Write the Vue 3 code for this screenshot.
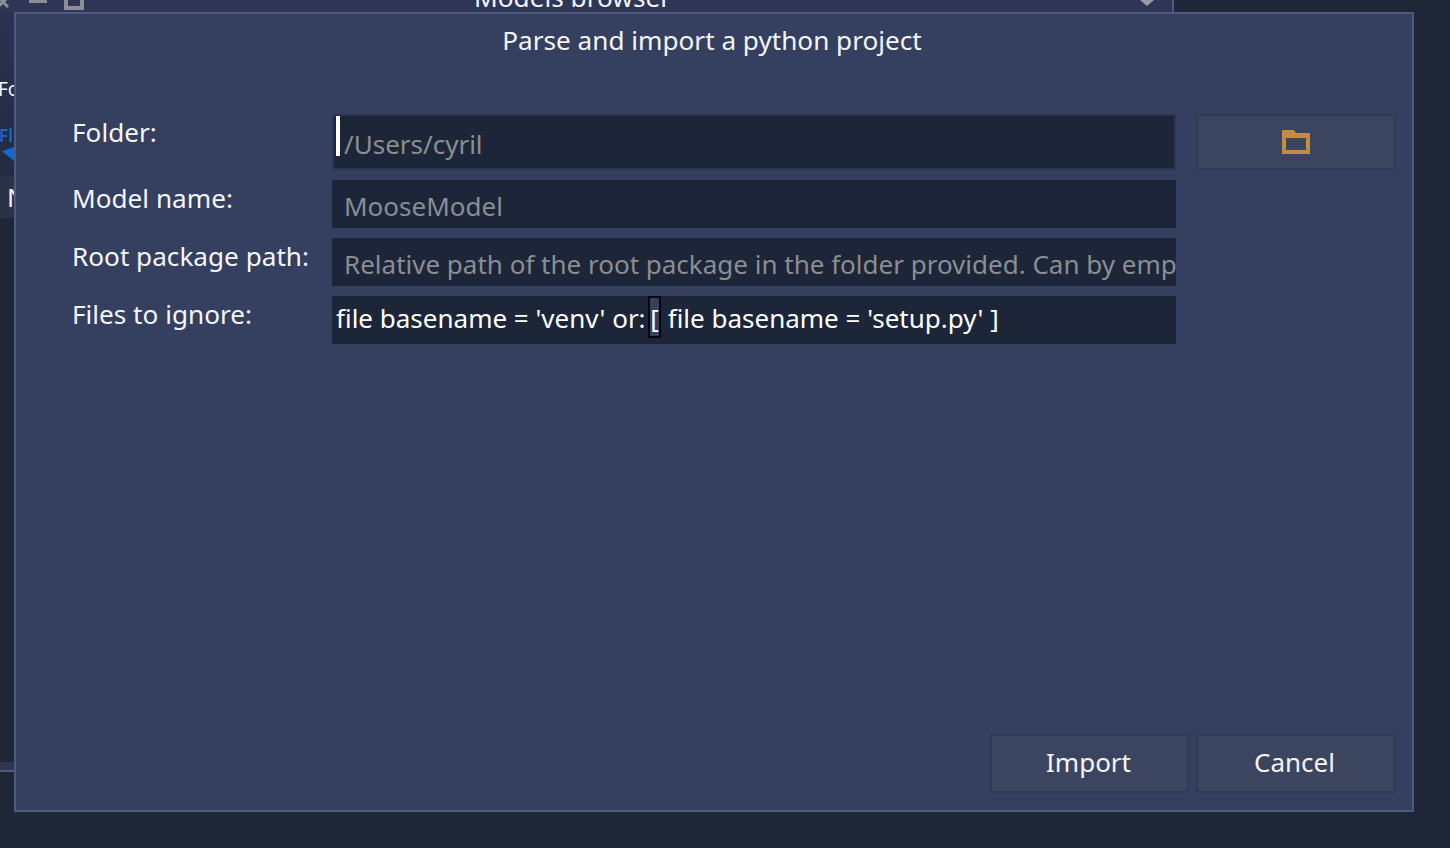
<template>
  <div class="desktop">
    <div class="back-window">
      <div class="back-titlebar">
        <svg class="win-close" width="12" height="8" viewBox="0 0 12 8">
          <path d="M-2 -3L8 7" stroke="#8c8f99" stroke-width="3" fill="none" />
          <path d="M8 -3L-2 7" stroke="#8c8f99" stroke-width="3" fill="none" />
        </svg>
        <span class="win-min"></span>
        <span class="win-max"></span>
        <span class="back-title">Models browser</span>
        <span class="back-arrow"></span>
      </div>
      <span class="peek peek-fo">Fo</span>
      <span class="peek peek-fl">Fl</span>
      <span class="peek-marker"></span>
      <span class="peek-row"></span>
      <span class="peek peek-n">N</span>
      <span class="peek-foot"></span>
    </div>

    <div class="dialog">
      <h1 class="dialog-title">Parse and import a python project</h1>

      <div class="form">
        <label class="row-label">Folder:</label>
        <div class="input input-folder">
          <span class="caret"></span>
          <span class="placeholder">/Users/cyril</span>
        </div>
        <button class="btn btn-folder" aria-label="Browse">
          <svg width="28" height="24" viewBox="0 0 28 24">
            <path fill-rule="evenodd" fill="#c48d3e" d="M0 0h12l2 3h14v21H0zM4 8v12h20V8z" />
          </svg>
        </button>

        <label class="row-label">Model name:</label>
        <div class="input input-hint"><span class="placeholder">MooseModel</span></div>
        <span></span>

        <label class="row-label">Root package path:</label>
        <div class="input input-hint">
          <span class="placeholder">Relative path of the root package in the folder provided. Can by empty</span>
        </div>
        <span></span>

        <label class="row-label">Files to ignore:</label>
        <div class="input input-code">
          <span>file basename = 'venv' or: <span class="cursor-char">[</span> file basename = 'setup.py' ]</span>
        </div>
        <span></span>
      </div>

      <div class="actions">
        <button class="btn btn-action">Import</button>
        <button class="btn btn-action">Cancel</button>
      </div>
    </div>
  </div>
</template>

<script setup>
</script>

<style>
html,
body {
  margin: 0;
  background: #1e2638;
}
</style>

<style scoped>
.desktop {
  position: relative;
  width: 1450px;
  height: 848px;
  overflow: hidden;
  background: #1e2638;
  font-family: "Noto Sans", sans-serif;
  color: #f4f6fa;
}

/* window behind the dialog, only its edges show */
.back-window {
  position: absolute;
  left: 0;
  top: 0;
  width: 1172px;
  height: 770px;
  background: linear-gradient(#2c3352 0, #232b42 170px, #1e2638 220px);
  border-right: 2px solid #4e5a80;
  border-bottom: 2px solid #4e5a80;
}

.back-titlebar {
  position: relative;
  height: 12px;
  background: #2f3655;
  overflow: hidden;
}

.win-close {
  position: absolute;
  left: 0;
  top: 0;
}

.win-min {
  position: absolute;
  left: 29px;
  top: 0;
  width: 18px;
  height: 3px;
  background: #8c8f99;
}

.win-max {
  position: absolute;
  left: 64px;
  top: -10px;
  width: 12px;
  height: 12px;
  border: 4px solid #8c8f99;
}

.back-title {
  position: absolute;
  left: 474px;
  top: -19px;
  font-size: 26.2px;
  line-height: 33px;
  white-space: nowrap;
}

.back-arrow {
  position: absolute;
  left: 1140px;
  top: 0;
  border-left: 7px solid transparent;
  border-right: 7px solid transparent;
  border-top: 6px solid #9a9ca3;
}

.peek {
  position: absolute;
  white-space: nowrap;
  line-height: 24px;
}

.peek-fo {
  left: -2px;
  top: 77px;
  font-size: 19px;
}

.peek-fl {
  left: -1px;
  top: 124px;
  font-size: 17px;
  font-weight: 600;
  color: #1668c8;
}

.peek-marker {
  position: absolute;
  left: 2px;
  top: 147px;
  width: 12px;
  height: 14px;
  background: #0f6ad6;
  clip-path: polygon(0 30%, 100% 0, 100% 100%);
}

.peek-row {
  position: absolute;
  left: 0;
  right: 0;
  top: 176px;
  height: 42px;
  background: #2a3248;
}

.peek-n {
  left: 7px;
  top: 184px;
  font-size: 26px;
  line-height: 26px;
}

.peek-foot {
  position: absolute;
  left: 0;
  right: 0;
  bottom: 0;
  height: 8px;
  background: #2f3655;
}

.dialog {
  position: absolute;
  left: 14px;
  top: 12px;
  width: 1400px;
  height: 800px;
  box-sizing: border-box;
  border: 2px solid #4e5a80;
  background: #353f60;
  display: flex;
  flex-direction: column;
  padding: 0 17px 17px 0;
}

.dialog-title {
  margin: 7px 0 0;
  padding-left: 13px;
  text-align: center;
  font-weight: 400;
  font-size: 26.15px;
  line-height: 38px;
}

.form {
  display: grid;
  grid-template-columns: 260px 844px 220px;
  grid-template-rows: 56px 48px 48px 48px;
  row-gap: 10px;
  margin-top: 55px;
  padding-left: 56px;
}

.row-label {
  font-size: 26.15px;
  line-height: 36px;
  white-space: nowrap;
}

.input {
  box-sizing: border-box;
  background: #1c2638;
  font-size: 26px;
  line-height: 48px;
  padding-left: 12px;
  white-space: nowrap;
  overflow: hidden;
}

.input-hint {
  line-height: 52px;
}

.input-folder {
  position: relative;
  border: 2px solid #2c3650;
  padding-left: 10px;
  line-height: 56px;
}

.placeholder {
  color: #8b8d93;
}

.caret {
  position: absolute;
  left: 2px;
  top: 0;
  width: 4px;
  height: 40px;
  background: #fff;
}

.input-code {
  padding-left: 4px;
  line-height: 44px;
  color: #fff;
}

.cursor-char {
  display: inline-block;
  box-sizing: content-box;
  margin: 0 0 0 -4px;
  height: 38px;
  line-height: 40px;
  border: 2px solid #05070c;
  border-right-width: 2px;
  background: #353f60;
  vertical-align: top;
}

.btn {
  box-sizing: border-box;
  border: 2px solid #313a54;
  background: #3c4560;
  color: #f4f6fa;
  font-family: inherit;
  padding: 0;
}

.btn-folder {
  margin-left: 20px;
  width: 200px;
  display: flex;
  align-items: center;
  justify-content: center;
}

.actions {
  margin-top: auto;
  display: flex;
  justify-content: flex-end;
  gap: 7px;
}

.btn-action {
  width: 199px;
  height: 59px;
  padding: 0 2px 3px 0;
  font-size: 26px;
}
</style>
